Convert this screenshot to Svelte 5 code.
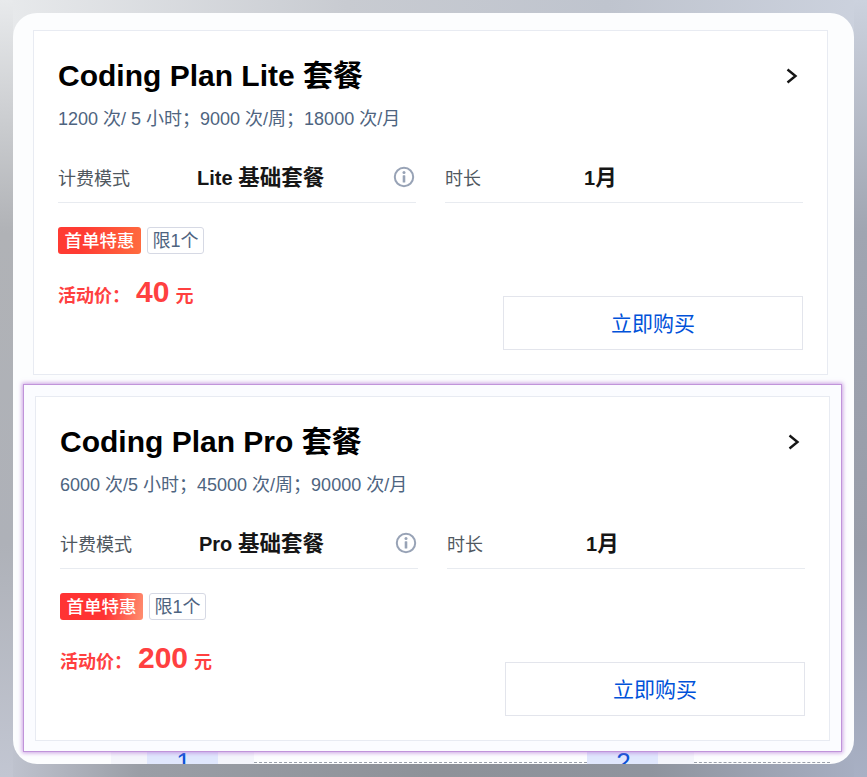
<script>
  const plans = [
    {
      name: 'Lite',
      quota: '1200 次/ 5 小时；9000 次/周；18000 次/月',
      price: 40,
    },
    {
      name: 'Pro',
      quota: '6000 次/5 小时；45000 次/周；90000 次/月',
      price: 200,
    },
  ];
</script>

{#snippet card(plan)}
  <section class="card">
    <div class="card__head">
      <h2>Coding Plan {plan.name} 套餐</h2>
      <svg class="chevron" width="14" height="18" viewBox="0 0 14 18" aria-hidden="true">
        <path d="M2.5 2.5 L10.5 9 L2.5 15.5" fill="none" stroke="#161616" stroke-width="2.4" />
      </svg>
    </div>
    <p class="quota">{plan.quota}</p>

    <div class="specs">
      <div class="spec">
        <span class="spec__label">计费模式</span>
        <span class="spec__value">{plan.name} <span class="cjk">基础套餐</span></span>
        <svg class="info" width="22" height="22" viewBox="0 0 22 22" aria-hidden="true">
          <circle cx="11" cy="11" r="9.2" fill="none" stroke="#98a3b6" stroke-width="2" />
          <circle cx="11" cy="6.6" r="1.5" fill="#98a3b6" />
          <rect x="9.7" y="9.2" width="2.6" height="7.4" rx="0.6" fill="#98a3b6" />
        </svg>
      </div>
      <div class="spec">
        <span class="spec__label">时长</span>
        <span class="spec__value">1<span class="cjk">月</span></span>
      </div>
    </div>

    <div class="tags">
      <span class="tag-hot">首单特惠</span>
      <span class="tag-limit">限1个</span>
    </div>

    <div class="foot">
      <div class="price">
        <span class="price__label">活动价：</span>
        <span class="price__num">{plan.price}</span>
        <span class="price__unit">元</span>
      </div>
      <button type="button" class="buy">立即购买</button>
    </div>
  </section>
{/snippet}

<div class="window">
  <div class="plain">
    {@render card(plans[0])}
  </div>
  <div class="active">
    {@render card(plans[1])}
  </div>
  <div class="steps">
    <div class="steps__band"></div>
    <div class="steps__pill"><span>1</span></div>
    <div class="steps__band"></div>
    <div class="steps__dash"></div>
    <div class="steps__pill"><span>2</span></div>
    <div class="steps__band"></div>
    <div class="steps__dash end"></div>
  </div>
</div>

<style>
  :global(body) {
    margin: 0;
    height: 777px;
    overflow: hidden;
    background-color: #b0b4bd;
    background-image:
      linear-gradient(180deg, #e8eaec 0%, #b0b2b6 30%, #aeb1b8 70%, #c2c6d2 100%),
      linear-gradient(180deg, #ccd2de 0%, #a0a5b1 30%, #979ca8 70%, #a8b0c4 100%),
      linear-gradient(90deg, #c2c6d2 0%, #9a9ea6 16%, #8e9299 50%, #8f949e 75%, #a8b0c4 100%),
      linear-gradient(90deg, #e8eaec 0%, #c8cbd1 40%, #bfc4ce 70%, #ccd2de 100%);
    background-repeat: no-repeat;
    background-size: 13px 100%, 13px 100%, 100% 37px, 100% 37px;
    background-position: left, right, bottom, top;
    font-family: "Liberation Sans", "Noto Sans CJK SC", sans-serif;
  }

  .window {
    box-sizing: border-box;
    width: 841px;
    height: 751px;
    margin: 13px 0 0 13px;
    padding-top: 17px;
    border-radius: 24px;
    background: #fcfdfe;
    overflow: hidden;
  }

  .plain {
    margin: 0 26px 0 20px;
  }

  .active {
    position: relative;
    z-index: 1;
    box-sizing: border-box;
    width: 819px;
    height: 368px;
    margin: 9px 0 0 10px;
    padding: 12px;
    background: #fbfcff;
    box-shadow: inset 0 0 0 1px #c094da, 0 0 4px 1px rgba(180, 115, 215, 0.65);
  }

  .card {
    box-sizing: border-box;
    height: 345px;
    padding: 24px;
    border: 1px solid #e8ebf2;
    background: #fff;
  }

  .card__head {
    display: flex;
    align-items: center;
    justify-content: space-between;
    height: 42px;
    padding-right: 4px;
  }

  h2 {
    margin: 0;
    font-size: 30px;
    font-weight: 700;
    line-height: 42px;
    color: #000;
  }

  .quota {
    margin: 9px 0 0;
    font-size: 18px;
    line-height: 26px;
    color: #4e6480;
  }

  .specs {
    display: grid;
    grid-template-columns: 358px 358px;
    column-gap: 29px;
    margin-top: 19px;
  }

  .spec {
    display: flex;
    align-items: center;
    height: 51px;
    border-bottom: 1px solid #e8ebf0;
  }

  .spec__label {
    flex: 0 0 139px;
    font-size: 18px;
    color: #50585f;
  }

  .spec__value {
    flex: 1;
    padding-bottom: 3px;
    font-size: 20px;
    font-weight: 700;
    color: #161616;
  }

  .cjk {
    font-size: 21.5px;
  }

  .info {
    margin-right: 1px;
  }

  .tags {
    display: flex;
    gap: 6px;
    margin-top: 24px;
  }

  .tag-hot,
  .tag-limit {
    box-sizing: border-box;
    height: 27px;
    border-radius: 3px;
    font-size: 18px;
    line-height: 29px;
    text-align: center;
  }

  .tag-hot {
    width: 83px;
    font-size: 17.5px;
    font-weight: 500;
    color: #fff;
    background: linear-gradient(100deg, #ff3b33 30%, #ff6c3f 100%);
  }

  .active .tag-hot {
    background: linear-gradient(100deg, #ff3333 55%, #ff8f70 100%);
  }

  .tag-limit {
    width: 57px;
    line-height: 26px;
    border: 1px solid #d6d9e4;
    color: #4e6480;
    background: #fff;
  }

  .foot {
    display: flex;
    justify-content: space-between;
    align-items: flex-start;
    margin-top: 16px;
  }

  .price {
    display: flex;
    align-items: baseline;
    color: #ff4040;
    font-weight: 700;
    line-height: 44px;
  }

  .price__label {
    font-size: 18px;
    width: 78px;
  }

  .price__num {
    font-size: 30px;
    margin-right: 6px;
  }

  .price__unit {
    font-size: 18px;
  }

  .buy {
    width: 300px;
    height: 54px;
    margin-top: 26px;
    padding-bottom: 3px;
    border: 1px solid #e3e5ec;
    background: #fff;
    color: #0052d9;
    font: inherit;
    font-size: 21px;
  }

  .steps {
    display: flex;
    height: 12px;
    overflow: hidden;
    padding-left: 98px;
  }

  .steps__band {
    flex: 0 0 36px;
    background: #f4f5fb;
  }

  .steps__pill {
    flex: 0 0 71px;
    box-sizing: border-box;
    height: 12px;
    padding-left: 2px;
    overflow: hidden;
    text-align: center;
    background: #e0e7fd;
    color: #0b52d6;
    font-size: 26px;
    line-height: 30px;
  }

  .steps__pill span {
    display: block;
    margin-top: -5px;
  }

  .steps__dash {
    flex: 0 0 333px;
    height: 10px;
    border-bottom: 1px dashed #9aa0ab;
  }

  .steps__dash.end {
    flex: 0 0 136px;
  }
</style>
